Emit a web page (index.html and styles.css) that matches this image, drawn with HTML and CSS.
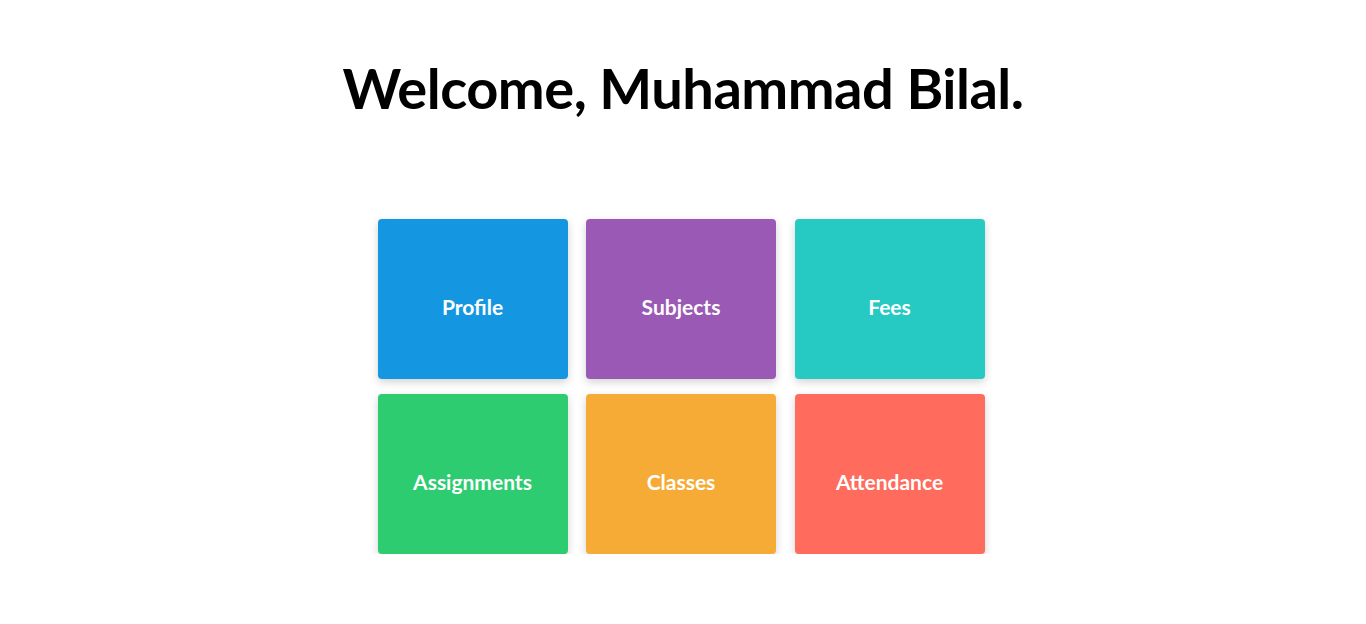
FILE: index.html
```html
<!DOCTYPE html>
<html lang="en">
<head>
<meta charset="utf-8">
<title>Dashboard</title>
<link rel="stylesheet" href="styles.css">
</head>
<body>
<main class="page">
  <h1 class="welcome">Welcome, Muhammad Bilal.</h1>
  <div class="tiles">
    <a class="tile tile-blue" href="#">Profile</a>
    <a class="tile tile-purple" href="#">Subjects</a>
    <a class="tile tile-teal" href="#">Fees</a>
    <a class="tile tile-green" href="#">Assignments</a>
    <a class="tile tile-orange" href="#">Classes</a>
    <a class="tile tile-red" href="#">Attendance</a>
  </div>
</main>
</body>
</html>
```
FILE: styles.css
```css
html, body {
  margin: 0;
  padding: 0;
  background: #fff;
}
body {
  font-family: Lato, "Open Sans", "Liberation Sans", sans-serif;
}
.page {
  display: flex;
  flex-direction: column;
  align-items: center;
}
.welcome {
  margin: 54px 0 0;
  font-size: 56px;
  line-height: 68px;
  font-weight: 700;
  color: #000;
  letter-spacing: -0.5px;
}
.tiles {
  margin: 97px 4px 0 0;
  display: grid;
  grid-template-columns: repeat(3, 190px);
  grid-auto-rows: 160px;
  column-gap: 18.5px;
  row-gap: 15px;
}
.tile {
  display: flex;
  align-items: center;
  justify-content: center;
  box-sizing: border-box;
  padding-top: 14px;
  border-radius: 4px;
  color: #fff;
  text-decoration: none;
  font-size: 21px;
  font-weight: 700;
  box-shadow: 0 3px 8px rgba(0, 0, 0, 0.18);
}
.tile-blue { background: #1497e0; }
.tile-purple { background: #9b59b6; }
.tile-teal { background: #26cac3; }
.tile-green { background: #2ecc71; }
.tile-orange { background: #f5ab35; }
.tile-red { background: #ff6b5d; }
```
